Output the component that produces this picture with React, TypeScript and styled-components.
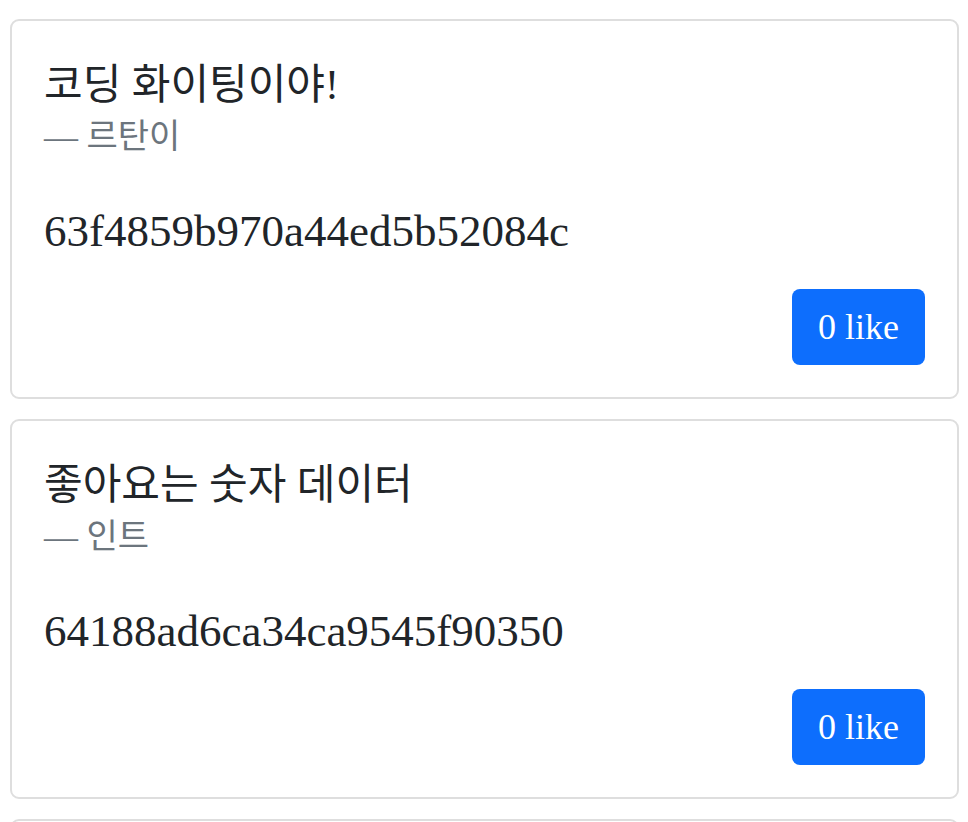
import React from "react";
import styled, { createGlobalStyle } from "styled-components";

const Global = createGlobalStyle`
  html, body { margin: 0; padding: 0; background: #ffffff; }
  body { font-family: "Liberation Serif", "Noto Sans CJK KR", serif; color: #212529; }
`;

const List = styled.div`
  display: flex;
  flex-direction: column;
  gap: 20px;
  padding: 19px 9px 0 10px;
`;

const Card = styled.div`
  border: 2px solid #dedede;
  border-radius: 9px;
  background: #fff;
`;

const Body = styled.div`
  display: flex;
  flex-direction: column;
  padding: 40px 32px 32px 32px;
`;

const Title = styled.h5`
  margin: 0 0 16px 0;
  font-size: 42px;
  line-height: 48px;
  font-weight: 400;
  color: #212529;
`;

const Subtitle = styled.h6`
  margin: -8px 0 0 0;
  font-size: 34px;
  line-height: 40px;
  font-weight: 400;
  color: #6c757d;
`;

const Text = styled.p`
  margin: 48px 0 32px 0;
  font-size: 45px;
  line-height: 52px;
  color: #212529;
`;

const Footer = styled.div`
  display: flex;
  justify-content: flex-end;
`;

const LikeButton = styled.button`
  display: inline-flex;
  align-items: center;
  justify-content: center;
  height: 76px;
  padding: 0 26px;
  border: none;
  border-radius: 8px;
  background: #0d6efd;
  color: #fff;
  font-family: "Liberation Serif", serif;
  font-size: 36px;
  cursor: pointer;
`;

const posts = [
  { title: "코딩 화이팅이야!", author: "르탄이", id: "63f4859b970a44ed5b52084c", likes: 0 },
  { title: "좋아요는 숫자 데이터", author: "인트", id: "64188ad6ca34ca9545f90350", likes: 0 },
  { title: "오늘도 열심히", author: "르탄이", id: "64188ad6ca34ca9545f90351", likes: 0 },
];

export default function App() {
  return (
    <>
      <Global />
      <List>
        {posts.map((p) => (
          <Card key={p.id}>
            <Body>
              <Title>{p.title}</Title>
              <Subtitle>— {p.author}</Subtitle>
              <Text>{p.id}</Text>
              <Footer>
                <LikeButton>{p.likes} like</LikeButton>
              </Footer>
            </Body>
          </Card>
        ))}
      </List>
    </>
  );
}
